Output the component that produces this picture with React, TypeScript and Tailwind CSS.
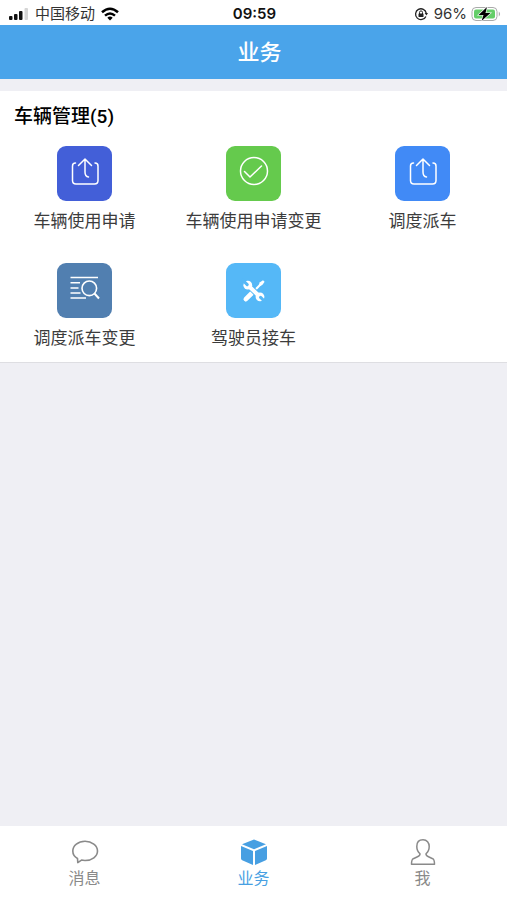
import React from 'react';

const ShareIcon = () => (
  <svg viewBox="0 0 55 55" className="size-full" fill="none" stroke="white" strokeWidth="1.5" strokeLinecap="round" strokeLinejoin="round" aria-hidden="true">
    <path d="M18.5 17Q15.500 17 15.500 20V34.500Q15.500 38 19 38H37.500Q41 38 41 34.500V20Q41 17 38 17" />
    <path d="M21.500 19.500L28 13L34.500 19.500M28 13V26Q28 30.500 31.500 31" />
  </svg>
);

const CheckIcon = () => (
  <svg viewBox="0 0 55 55" className="size-full" fill="none" stroke="white" strokeWidth="1.5" strokeLinecap="round" strokeLinejoin="round" aria-hidden="true">
    <circle cx="28" cy="25" r="13.5" />
    <path d="M18.5 25.500L24 31L35.500 20" />
  </svg>
);

const SearchListIcon = () => (
  <svg viewBox="0 0 55 55" className="size-full" fill="none" stroke="white" strokeWidth="1.6" aria-hidden="true">
    <path d="M13.5 14.500H41M13.500 19.800H23M13.500 25H21.500M13.500 30H23.500M13.500 35H29" />
    <circle cx="32.3" cy="25.3" r="7.3" />
    <path d="M37.5 30.500L42 35.500" strokeWidth="2" />
  </svg>
);

const ToolsIcon = () => (
  <svg viewBox="0 0 55 55" className="size-full" fill="none" aria-hidden="true">
    <path d="M19.8 36.200L26 30" stroke="white" strokeWidth="4.6" strokeLinecap="round" />
    <path d="M26 30L35 21" stroke="white" strokeWidth="2" />
    <path d="M32.8 21.500L34 19.300L37 17.200L38.600 18.800L36.500 21.800L34.300 23Z" fill="white" />
    <path d="M23 23L33 33" stroke="#55b8f7" strokeWidth="6" />
    <circle cx="21.8" cy="22.2" r="4.4" fill="white" />
    <circle cx="34" cy="33.8" r="4.4" fill="white" />
    <path d="M17 17.400L21.200 21.600M38.800 38.600L34.600 34.400" stroke="#55b8f7" strokeWidth="3" strokeLinecap="round" />
    <path d="M23.5 23.700L32.300 32.300" stroke="white" strokeWidth="4" />
  </svg>
);

const ChatIcon = () => (
  <svg viewBox="0 0 28 28" className="size-7" fill="none" stroke="#8a8a8a" strokeWidth="1.6" strokeLinejoin="round" aria-hidden="true">
    <path d="M6.5 20.500C3.500 18.800 1.800 16.300 1.800 13C1.800 7.500 7.200 3.300 14 3.300S26.500 7.500 26.500 13S21 22.500 14 22.500C12.700 22.500 11.500 22.400 10.500 22.100L6.800 24.600Z" />
  </svg>
);

const CubeIcon = () => (
  <svg viewBox="0 0 28 28" className="size-7" fill="#479fe2" aria-hidden="true">
    <path d="M14 1.500L26 6.300L14 11.300L2 6.300Z" />
    <path d="M1 8L13 13V27L2.200 22.200Q1 21.700 1 20.500Z" />
    <path d="M27 8L15 13V27L25.800 22.200Q27 21.700 27 20.500Z" />
  </svg>
);

const PersonIcon = () => (
  <svg viewBox="0 0 28 28" className="size-7" fill="none" stroke="#8a8a8a" strokeWidth="1.5" strokeLinejoin="round" aria-hidden="true">
    <path d="M14 1.800C10 1.800 7.800 4.500 7.800 8.500C7.800 11.500 9 14 11 15.700C11.200 17.300 10.500 18 8.500 18.800L4.300 20.700C2.800 21.500 2.500 22.500 2.500 26.200H25.500C25.500 22.500 25.200 21.500 23.700 20.700L19.500 18.800C17.500 18 16.800 17.300 17 15.700C19 14 20.200 11.500 20.200 8.500C20.200 4.500 18 1.800 14 1.800Z" />
  </svg>
);

const StatusBar = () => (
  <div className="grid h-[25px] grid-cols-3 items-center bg-white pt-0.5 pr-1.5 pl-2 text-[15px] leading-5 text-[#333]">
    <div className="flex items-center gap-1.5">
      <svg viewBox="0 0 21 12" className="h-3 w-[21px]" aria-hidden="true">
        <rect x="1" y="8" width="3.5" height="4" rx="1" fill="#111" />
        <rect x="6" y="6" width="3.5" height="6" rx="1" fill="#111" />
        <rect x="11" y="3" width="3.5" height="9" rx="1" fill="#111" />
        <rect x="16.5" y="0" width="3.5" height="12" rx="1" fill="#d5d5d5" />
      </svg>
      <span className="whitespace-nowrap">中国移动</span>
      <svg viewBox="0 0 18 14" className="h-3.5 w-[18px]" fill="none" stroke="#000" strokeWidth="2.5" aria-hidden="true">
        <path d="M1 5.300Q9 -1.800 17 5.300M4 8.600Q9 4.300 14 8.600" />
        <path d="M9 13.500L6.300 10.700Q9 8.500 11.700 10.700Z" fill="#000" stroke="none" />
      </svg>
    </div>
    <div className="text-center font-semibold text-[#111]">09:59</div>
    <div className="flex items-center justify-end gap-1">
      <svg viewBox="0 0 14 14" className="mr-0.5 size-3.5" fill="none" stroke="#222" strokeWidth="1.3" aria-hidden="true">
        <path d="M11.9 9.400A5.400 5.400 0 1 1 12.300 6.300" />
        <path d="M10.7 6L14 6L12.400 8.400Z" fill="#222" stroke="none" />
        <rect x="4.5" y="6.4" width="5" height="3.6" rx="0.6" fill="#222" stroke="none" />
        <path d="M5.5 7V5.400A1.500 1.500 0 0 1 8.500 5.400V7" strokeWidth="1" />
      </svg>
      <span>96%</span>
      <svg viewBox="0 0 30 16" className="h-4 w-[30px]" aria-hidden="true">
        <rect x="1" y="1.5" width="25" height="13" rx="4" fill="white" stroke="#aaa" />
        <rect x="3" y="3.5" width="21" height="9" rx="2" fill="#65ce69" />
        <path d="M27.8 5.500Q30.300 8 27.800 10.500Z" fill="#aaa" />
        <path d="M16 1L7.500 9H12.500L10.500 15L19.500 7H14.500Z" fill="#000" stroke="white" strokeWidth="1.2" paintOrder="stroke" />
      </svg>
    </div>
  </div>
);

const services = [
  { name: '车辆使用申请', color: 'bg-[#435fd8]', icon: <ShareIcon /> },
  { name: '车辆使用申请变更', color: 'bg-[#65ca4d]', icon: <CheckIcon /> },
  { name: '调度派车', color: 'bg-[#418af6]', icon: <ShareIcon /> },
  { name: '调度派车变更', color: 'bg-[#517fb0]', icon: <SearchListIcon /> },
  { name: '驾驶员接车', color: 'bg-[#55b8f7]', icon: <ToolsIcon /> },
];

const tabs = [
  { name: '消息', icon: <ChatIcon />, active: false },
  { name: '业务', icon: <CubeIcon />, active: true },
  { name: '我', icon: <PersonIcon />, active: false },
];

export default function App() {
  return (
    <div className="flex min-h-screen flex-col bg-[#efeff4] font-[Inter,'Noto_Sans_CJK_SC',sans-serif]">
      <StatusBar />
      <header className="flex h-[54px] items-center justify-center bg-[#4aa4ea] pl-3 text-white">
        <h1 className="text-[22px] leading-8 font-medium">业务</h1>
      </header>

      <main className="flex-1 pt-3">
        <section className="border-b border-[#dedee2] bg-white pb-3">
          <h2 className="px-3.5 pt-3 pb-4 font-[Roboto,'Noto_Sans_CJK_SC',sans-serif] text-[19px] leading-[27px] font-medium text-black">
            车辆管理(5)
          </h2>
          <div className="grid grid-cols-3 gap-y-[30px]">
            {services.map((item) => (
              <button key={item.name} type="button" className="flex flex-col items-center gap-2">
                <span className={`size-[55px] rounded-[9px] ${item.color}`}>{item.icon}</span>
                <span className="text-[17px] leading-6 whitespace-nowrap text-[#3c3c3c]">{item.name}</span>
              </button>
            ))}
          </div>
        </section>
      </main>

      <nav className="grid h-[74px] grid-cols-3 bg-white">
        {tabs.map((tab) => (
          <a
            key={tab.name}
            href="#"
            aria-current={tab.active ? 'page' : undefined}
            className={`flex flex-col items-center pt-3 text-[16px] leading-6 ${tab.active ? 'text-[#479fe2]' : 'text-[#8a8a8a]'}`}
          >
            {tab.icon}
            <span>{tab.name}</span>
          </a>
        ))}
      </nav>
    </div>
  );
}
